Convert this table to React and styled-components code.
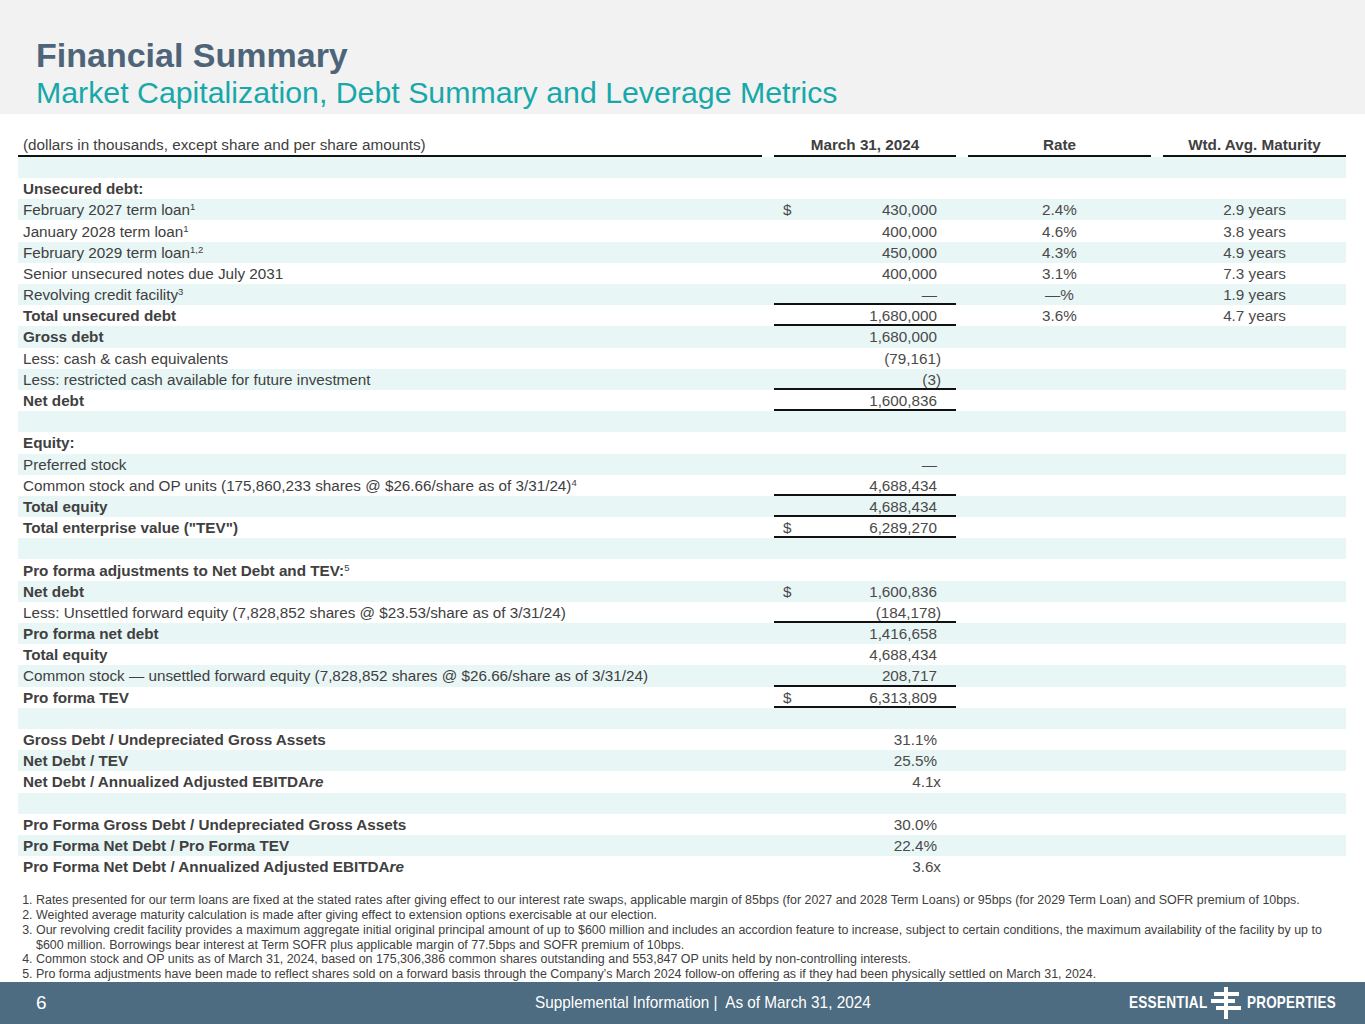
import React from 'react';
import styled, { createGlobalStyle } from 'styled-components';

const GlobalStyle = createGlobalStyle`
  body {
    margin: 0;
    background: #fff;
    font-family: "Liberation Sans", Arial, sans-serif;
  }
`

const Page = styled.div`
  width: 1365px;
  height: 1024px;
  display: flex;
  flex-direction: column;
  overflow: hidden;
`
const Header = styled.header`
  background: #f2f2f2;
  height: 114px;
  box-sizing: border-box;
  padding: 35px 0 0 36px;
`
const Title = styled.h1`
  margin: 0;
  font-size: 34px;
  line-height: 40px;
  font-weight: 700;
  color: #4e6579;
`
const Subtitle = styled.h2`
  margin: 0;
  font-size: 30.3px;
  line-height: 36px;
  font-weight: 400;
  color: #17a8a9;
`
const Table = styled.div`
  margin: 20px 19px 0 18px;
  color: #404040;
  font-size: 15.25px;
`
const Row = styled.div`
  display: grid;
  grid-template-columns: 744px 182px 183px 183px;
  column-gap: 12px;
  height: ${p => p.$head ? '23px' : '21.2px'};
  align-items: center;
  background: ${p => p.$band ? '#e9f6f6' : 'transparent'};
`
const HeadCell = styled.div`
  height: 100%;
  box-sizing: border-box;
  border-bottom: 2px solid #111;
  display: flex;
  align-items: center;
  justify-content: ${p => p.$left ? 'flex-start' : 'center'};
  padding-left: ${p => p.$left ? '5px' : '0'};
  font-weight: ${p => p.$left ? 400 : 700};
  color: #404040;
`
const Label = styled.div`
  padding-left: 5px;
  font-weight: ${p => p.$bold ? 700 : 400};
  white-space: nowrap;
  sup {
    font-size: 9.5px;
    font-weight: 400;
    vertical-align: 5px;
    line-height: 0;
  }
  em {
    font-style: italic;
  }
`
const Amount = styled.div`
  height: 100%;
  box-sizing: border-box;
  display: flex;
  align-items: center;
  justify-content: space-between;
  padding: 0 ${p => p.$hang ? '15px' : '19px'} 0 9px;
  box-shadow: ${p => p.$rule ? 'inset 0 -2px 0 #111' : 'none'};
  color: #4a4a4a;
`
const Center = styled.div`
  text-align: center;
  color: #4a4a4a;
`
const Notes = styled.ol`
  margin: 16px 0 0 0;
  padding: 0 0 0 36px;
  font-size: 12.45px;
  line-height: 14.8px;
  color: #404040;
`
const Footer = styled.footer`
  margin-top: auto;
  height: 42px;
  background: #4d6b81;
  color: #fff;
  display: grid;
  grid-template-columns: 499px auto 1fr;
  align-items: center;
  padding: 0 29px 0 36px;
`
const PageNo = styled.span`
  font-size: 19px;
`
const FootText = styled.span`
  display: inline-block;
  font-size: 17px;
  white-space: nowrap;
  transform: scaleX(0.9);
  transform-origin: left center;
  width: 334px;
`
const Logo = styled.div`
  justify-self: end;
  display: flex;
  align-items: center;
  gap: 6px;
`
const LogoWord = styled.span`
  display: inline-block;
  font-size: 17px;
  font-weight: 700;
  letter-spacing: 0.3px;
  transform: scaleX(${p => p.$sx});
  transform-origin: left center;
  width: ${p => p.$w};
  white-space: nowrap;
`

const rows = [
  {},
  { label: 'Unsecured debt:', bold: true },
  { label: 'February 2027 term loan', sup: '1', dollar: true, value: '430,000', rate: '2.4%', mat: '2.9 years' },
  { label: 'January 2028 term loan', sup: '1', value: '400,000', rate: '4.6%', mat: '3.8 years' },
  { label: 'February 2029 term loan', sup: '1,2', value: '450,000', rate: '4.3%', mat: '4.9 years' },
  { label: 'Senior unsecured notes due July 2031', value: '400,000', rate: '3.1%', mat: '7.3 years' },
  { label: 'Revolving credit facility', sup: '3', value: '—', rate: '—%', mat: '1.9 years', rule: true },
  { label: 'Total unsecured debt', bold: true, value: '1,680,000', rate: '3.6%', mat: '4.7 years', rule: true },
  { label: 'Gross debt', bold: true, value: '1,680,000' },
  { label: 'Less: cash & cash equivalents', value: '(79,161)', hang: true },
  { label: 'Less: restricted cash available for future investment', value: '(3)', hang: true, rule: true },
  { label: 'Net debt', bold: true, value: '1,600,836', rule: true },
  {},
  { label: 'Equity:', bold: true },
  { label: 'Preferred stock', value: '—' },
  { label: 'Common stock and OP units (175,860,233 shares @ $26.66/share as of 3/31/24)', sup: '4', value: '4,688,434', rule: true },
  { label: 'Total equity', bold: true, value: '4,688,434', rule: true },
  { label: 'Total enterprise value ("TEV")', bold: true, dollar: true, value: '6,289,270', rule: true },
  {},
  { label: 'Pro forma adjustments to Net Debt and TEV:', sup: '5', bold: true },
  { label: 'Net debt', bold: true, dollar: true, value: '1,600,836' },
  { label: 'Less: Unsettled forward equity (7,828,852 shares @ $23.53/share as of 3/31/24)', value: '(184,178)', hang: true, rule: true },
  { label: 'Pro forma net debt', bold: true, value: '1,416,658' },
  { label: 'Total equity', bold: true, value: '4,688,434' },
  { label: 'Common stock — unsettled forward equity (7,828,852 shares @ $26.66/share as of 3/31/24)', value: '208,717', rule: true },
  { label: 'Pro forma TEV', bold: true, dollar: true, value: '6,313,809', rule: true },
  {},
  { label: 'Gross Debt / Undepreciated Gross Assets', bold: true, value: '31.1%' },
  { label: 'Net Debt / TEV', bold: true, value: '25.5%' },
  { label: 'Net Debt / Annualized Adjusted EBITDA', re: true, bold: true, value: '4.1x', hang: true },
  {},
  { label: 'Pro Forma Gross Debt / Undepreciated Gross Assets', bold: true, value: '30.0%' },
  { label: 'Pro Forma Net Debt / Pro Forma TEV', bold: true, value: '22.4%' },
  { label: 'Pro Forma Net Debt / Annualized Adjusted EBITDA', re: true, bold: true, value: '3.6x', hang: true },
]

const notes = [
  'Rates presented for our term loans are fixed at the stated rates after giving effect to our interest rate swaps, applicable margin of 85bps (for 2027 and 2028 Term Loans) or 95bps (for 2029 Term Loan) and SOFR premium of 10bps.',
  'Weighted average maturity calculation is made after giving effect to extension options exercisable at our election.',
  <>Our revolving credit facility provides a maximum aggregate initial original principal amount of up to $600 million and includes an accordion feature to increase, subject to certain conditions, the maximum availability of the facility by up to<br />$600 million. Borrowings bear interest at Term SOFR plus applicable margin of 77.5bps and SOFR premium of 10bps.</>,
  'Common stock and OP units as of March 31, 2024, based on 175,306,386 common shares outstanding and 553,847 OP units held by non-controlling interests.',
  'Pro forma adjustments have been made to reflect shares sold on a forward basis through the Company’s March 2024 follow-on offering as if they had been physically settled on March 31, 2024.',
]

const LogoMark = () => (
  <svg width="30" height="32" viewBox="0 0 30 32" fill="#fff">
    <rect x="13" y="0" width="4" height="32" />
    <rect x="3" y="5" width="25" height="4" />
    <rect x="0" y="12" width="24" height="4" />
    <rect x="5" y="19" width="25" height="4" />
  </svg>
)

const App = () => {
  return (
    <Page>
      <GlobalStyle />
      <Header>
        <Title>Financial Summary</Title>
        <Subtitle>Market Capitalization, Debt Summary and Leverage Metrics</Subtitle>
      </Header>
      <Table>
        <Row $head>
          <HeadCell $left>(dollars in thousands, except share and per share amounts)</HeadCell>
          <HeadCell>March 31, 2024</HeadCell>
          <HeadCell>Rate</HeadCell>
          <HeadCell>Wtd. Avg. Maturity</HeadCell>
        </Row>
        {rows.map((r, i) => (
          <Row key={i} $band={i % 2 === 0}>
            <Label $bold={r.bold}>
              {r.label}
              {r.re && <em>re</em>}
              {r.sup && <sup>{r.sup}</sup>}
            </Label>
            <Amount $hang={r.hang} $rule={r.rule}>
              <span>{r.dollar ? '$' : ''}</span>
              <span>{r.value}</span>
            </Amount>
            <Center>{r.rate}</Center>
            <Center>{r.mat}</Center>
          </Row>
        ))}
      </Table>
      <Notes>
        {notes.map((n, i) => <li key={i}>{n}</li>)}
      </Notes>
      <Footer>
        <PageNo>6</PageNo>
        <FootText>Supplemental Information |&nbsp; As of March 31, 2024</FootText>
        <Logo>
          <LogoWord $w="76px" $sx={0.8}>ESSENTIAL</LogoWord>
          <LogoMark />
          <LogoWord $w="89px" $sx={0.79}>PROPERTIES</LogoWord>
        </Logo>
      </Footer>
    </Page>
  )
}

export default App;
